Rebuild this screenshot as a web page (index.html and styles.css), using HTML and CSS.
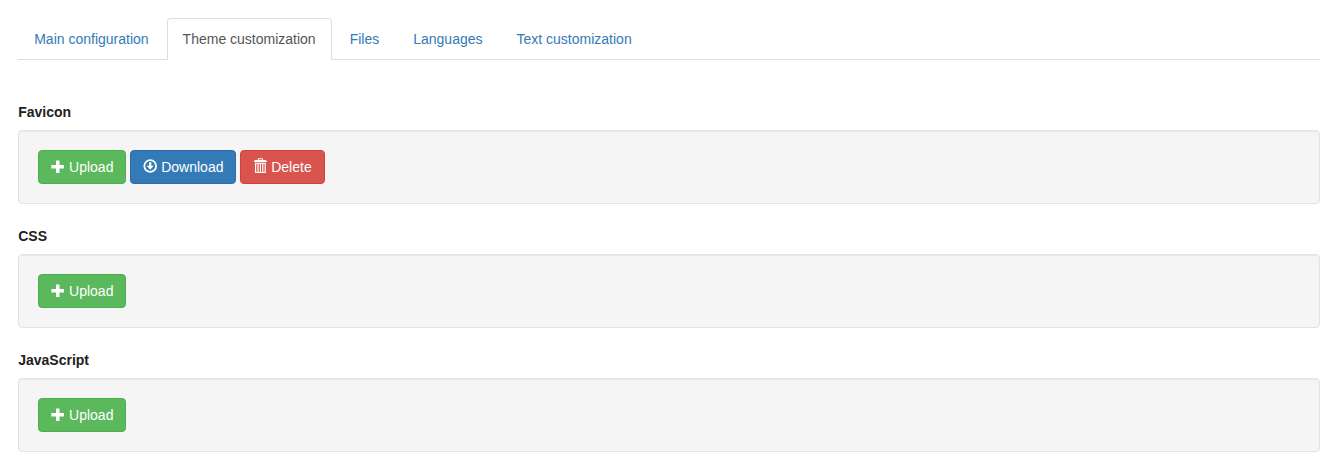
FILE: index.html
```html
<!DOCTYPE html>
<html lang="en">
<head>
<meta charset="utf-8">
<title>Theme customization</title>
<link rel="stylesheet" href="styles.css">
</head>
<body>
<svg class="sprite" aria-hidden="true">
  <symbol id="plus" viewBox="0 0 14 14"><path d="M5 .5h3.500V5H13v3.500H8.500V13H5V8.500H.3V5H5z" fill="currentColor"/></symbol>
  <symbol id="download" viewBox="0 0 14 14"><circle cx="7.200" cy="7" r="5.900" fill="none" stroke="currentColor" stroke-width="1.800"/><path d="M6.100 3.200h2.200v3.500h2.400l-3.500 4-3.500-4h2.400z" fill="currentColor"/></symbol>
  <symbol id="trash" viewBox="-.7 0 14 16"><path d="M4.600 2.200V.7h4.200v1.500" fill="none" stroke="currentColor" stroke-width="1"/><path d="M.9 2h11.600v.9h.7V4H.2V2.900h.7zM1.300 4.800h10.800V15.100H1.300z M2.500 5.800V14h1.200V5.800zM4.900 5.800V14h1.200V5.800zM7.300 5.800V14h1.200V5.800zM9.700 5.800V14h1.200V5.800z" fill="currentColor" fill-rule="evenodd"/></symbol>
</svg>
<nav class="tabs">
  <a class="tab">Main configuration</a>
  <a class="tab active">Theme customization</a>
  <a class="tab">Files</a>
  <a class="tab">Languages</a>
  <a class="tab">Text customization</a>
</nav>
<main>
  <section class="group">
    <h2 class="label">Favicon</h2>
    <div class="well">
      <button class="btn success"><svg class="icon"><use href="#plus"/></svg>Upload</button>
      <button class="btn primary"><svg class="icon download"><use href="#download"/></svg>Download</button>
      <button class="btn danger"><svg class="icon trash"><use href="#trash"/></svg>Delete</button>
    </div>
  </section>
  <section class="group">
    <h2 class="label">CSS</h2>
    <div class="well"><button class="btn success"><svg class="icon"><use href="#plus"/></svg>Upload</button></div>
  </section>
  <section class="group">
    <h2 class="label">JavaScript</h2>
    <div class="well"><button class="btn success"><svg class="icon"><use href="#plus"/></svg>Upload</button></div>
  </section>
</main>
</body>
</html>
```
FILE: styles.css
```css
* { box-sizing: border-box; }
body { margin: 0; padding: 18px 21px 0 18.2px; background: #fff; color: #212121; font: 14px/20px "Liberation Sans", Arial, sans-serif; }
.sprite { display: none; }
.tabs { display: flex; height: 42px; border-bottom: 1px solid #ddd; }
.tab { height: 42px; margin-right: 2px; padding: 10px 15px; border: 1px solid transparent; border-radius: 4px 4px 0 0; color: #337ab7; white-space: nowrap; }
.tab.active { border-color: #ddd #ddd #fff; background: #fff; color: #555; }
main { padding-top: 42px; }
.label { margin: 0 0 8px; font-size: 14px; line-height: 20px; font-weight: 700; }
.well { display: flex; gap: 3.89px; height: 74px; margin-bottom: 22px; padding: 19px; border: 1px solid #e3e3e3; border-radius: 4px; background: #f5f5f5; box-shadow: inset 0 1px 1px rgba(0,0,0,.05); }
.btn { display: flex; align-items: flex-start; gap: 3.89px; height: 34px; padding: 6px 12px; border: 1px solid; border-radius: 4px; color: #fff; font: inherit; white-space: nowrap; }
.icon { flex: none; width: 14px; height: 14px; margin-top: 3px; }
.download { margin-top: 2px; }
.trash { height: 16px; margin-top: 1px; }
.success { background: #5cb85c; border-color: #4cae4c; }
.primary { background: #337ab7; border-color: #2e6da4; }
.danger { background: #d9534f; border-color: #d43f3a; }
```
